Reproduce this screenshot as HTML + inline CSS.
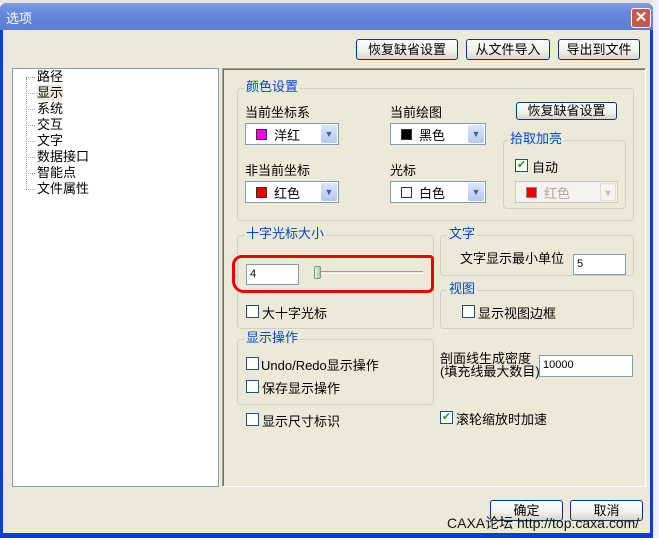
<!DOCTYPE html>
<html><head><meta charset="utf-8"><style>
*{margin:0;padding:0;box-sizing:border-box}
body{width:659px;height:538px;overflow:hidden;background:#fff;font-family:"Liberation Sans","Noto Sans CJK SC",sans-serif;font-size:13px;color:#000;position:relative}
.a{position:absolute}
.win{left:0;top:3px;width:653px;height:535px;background:#0a3fd0;border-radius:6px 6px 0 0}
.title{left:0;top:3px;width:653px;height:27px;background:linear-gradient(#7d9ce6,#6486dc 40%,#5a7ed6);border-radius:6px 6px 0 0;color:#fff;font-size:13px;padding:5px 6px}
.body{left:3px;top:30px;width:647px;height:503px;background:#ece9d8}
.btn{position:absolute;border:1px solid #003c74;border-radius:3px;background:linear-gradient(#fff,#f0f0ea 60%,#d8d4c8);text-align:center;font-size:13px;line-height:19px}
.grp{position:absolute;border:1px solid #d0d0bf;border-radius:4px}
.gl{position:absolute;background:#ece9d8;color:#0046d5;padding:0 2px;font-size:13px;top:-10px;left:6px;line-height:16px}
.combo{position:absolute;height:22px;background:#fff;border:1px solid #7f9db9}
.combo .sw{position:absolute;left:10px;top:5px;width:11px;height:11px;border:1px solid #333}
.combo .t{position:absolute;left:28px;top:1px}
.combo .dd{position:absolute;right:1px;top:1px;width:16px;height:18px;background:linear-gradient(#dbe6fb,#b5c8f2);border-radius:2px;color:#4d6185;font-size:9px;text-align:center;line-height:18px}
.cb{position:absolute;width:13px;height:13px;border:1px solid #1c5180;background:#fff}
.inp{position:absolute;background:#fff;border:1px solid #7f9db9;padding:3px 3px;font-size:11px}
.tr div{height:16px;position:relative;padding-left:11px}
.tr div:before{content:"";position:absolute;left:0;top:8px;width:9px;border-top:1px dotted #999}
</style></head><body>
<div class="a" style="left:0;top:0;width:659px;height:3px;background:#e8e4dc"></div>
<div class="a" style="left:653px;top:0;width:6px;height:538px;background:#eef"></div>
<div class="a win"></div>
<div class="a title">选项</div>
<div class="a" style="left:631px;top:8px;width:20px;height:20px;background:#c8584e;border:1px solid #fff;border-radius:3px;color:#fff;text-align:center;font-size:15px;line-height:18px;font-weight:bold">✕</div>
<div class="a body"></div>

<div class="btn" style="left:356px;top:39px;width:102px;height:21px">恢复缺省设置</div>
<div class="btn" style="left:466px;top:39px;width:84px;height:21px">从文件导入</div>
<div class="btn" style="left:558px;top:39px;width:82px;height:21px">导出到文件</div>

<div class="a" style="left:12px;top:68px;width:207px;height:419px;background:#fff;border:1px solid #7f9db9"></div>
<div class="a" style="left:26px;top:78px;width:1px;height:112px;border-left:1px dotted #999"></div>
<div class="a tr" style="left:26px;top:69px;line-height:16px">
<div>路径</div><div><span style="background:#ece9d8">显示</span></div><div>系统</div><div>交互</div><div>文字</div><div>数据接口</div><div>智能点</div><div>文件属性</div></div>

<div class="a" style="left:222px;top:68px;width:424px;height:419px;border:1px solid #a0a0a0;border-right-color:#fff;border-bottom-color:#fff;box-shadow:inset 1px 1px 0 #716f64"></div>

<div class="grp" style="left:237px;top:88px;width:397px;height:133px"><div class="gl">颜色设置</div></div>
<div class="a" style="left:245px;top:102px">当前坐标系</div>
<div class="a" style="left:390px;top:102px">当前绘图</div>
<div class="btn" style="left:516px;top:102px;width:101px;height:18px;line-height:16px">恢复缺省设置</div>
<div class="combo" style="left:245px;top:123px;width:94px"><div class="sw" style="background:#f0f"></div><div class="t">洋红</div><div class="dd">▼</div></div>
<div class="combo" style="left:390px;top:123px;width:96px"><div class="sw" style="background:#000"></div><div class="t">黑色</div><div class="dd">▼</div></div>
<div class="a" style="left:245px;top:160px">非当前坐标</div>
<div class="a" style="left:390px;top:160px">光标</div>
<div class="combo" style="left:245px;top:181px;width:94px"><div class="sw" style="background:#e00"></div><div class="t">红色</div><div class="dd">▼</div></div>
<div class="combo" style="left:390px;top:181px;width:96px"><div class="sw" style="background:#fff"></div><div class="t">白色</div><div class="dd">▼</div></div>
<div class="grp" style="left:503px;top:140px;width:123px;height:69px"><div class="gl" style="left:4px">拾取加亮</div></div>
<div class="cb" style="left:515px;top:159px;color:#21a121;font-size:11px;line-height:11px;text-align:center">✔</div>
<div class="a" style="left:532px;top:157px">自动</div>
<div class="combo" style="left:515px;top:181px;width:103px;border-color:#c9c7ba;background:#f4f3ee"><div class="sw" style="background:#e00;border-color:#888"></div><div class="t" style="color:#aca899">红色</div><div class="dd" style="background:#f4f3ee;color:#bbb;border:1px solid #e0ddd0">▼</div></div>

<div class="grp" style="left:237px;top:235px;width:197px;height:94px"><div class="gl">十字光标大小</div></div>
<div class="inp" style="left:246px;top:264px;width:53px;height:21px">4</div>
<div class="a" style="left:316px;top:271px;width:107px;height:3px;border-top:1px solid #9d9c99;border-bottom:1px solid #fff"></div>
<div class="a" style="left:314px;top:266px;width:7px;height:13px;border:1px solid #7a9a7a;border-radius:2px;background:linear-gradient(90deg,#e9f5e9,#9ccf9c)"></div>
<div class="a" style="left:232px;top:255px;width:202px;height:38px;border:3px solid #e00;border-radius:10px 4px 6px 12px"></div>
<div class="cb" style="left:246px;top:305px"></div>
<div class="a" style="left:262px;top:303px">大十字光标</div>

<div class="grp" style="left:440px;top:235px;width:194px;height:41px"><div class="gl">文字</div></div>
<div class="a" style="left:460px;top:248px">文字显示最小单位</div>
<div class="inp" style="left:573px;top:254px;width:53px;height:21px">5</div>
<div class="grp" style="left:440px;top:290px;width:194px;height:39px"><div class="gl">视图</div></div>
<div class="cb" style="left:462px;top:305px"></div>
<div class="a" style="left:478px;top:303px">显示视图边框</div>

<div class="grp" style="left:237px;top:339px;width:197px;height:66px"><div class="gl">显示操作</div></div>
<div class="cb" style="left:246px;top:357px"></div>
<div class="a" style="left:261px;top:355px">Undo/Redo显示操作</div>
<div class="cb" style="left:246px;top:380px"></div>
<div class="a" style="left:262px;top:378px">保存显示操作</div>

<div class="a" style="left:440px;top:352px;line-height:13px">剖面线生成密度<br>(填充线最大数目)</div>
<div class="inp" style="left:539px;top:355px;width:94px;height:22px">10000</div>

<div class="cb" style="left:246px;top:413px"></div>
<div class="a" style="left:262px;top:411px">显示尺寸标识</div>
<div class="cb" style="left:440px;top:411px;color:#21a121;font-size:11px;line-height:11px;text-align:center">✔</div>
<div class="a" style="left:456px;top:409px">滚轮缩放时加速</div>

<div class="btn" style="left:490px;top:500px;width:73px;height:21px">确定</div>
<div class="btn" style="left:570px;top:500px;width:73px;height:21px">取消</div>
<div class="a" style="left:447px;top:513px;font-size:14px;color:#111">CAXA论坛 http://top.caxa.com/</div>
</body></html>
